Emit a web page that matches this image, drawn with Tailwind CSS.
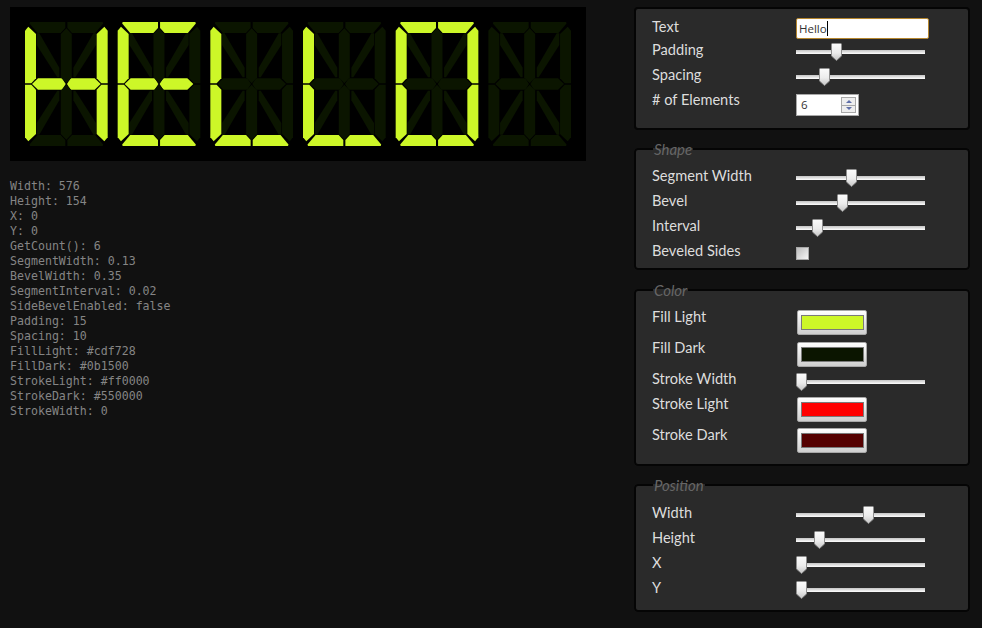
<!DOCTYPE html>
<html lang="en">

<head>
    <meta charset="UTF-8">
    <title>Segment Display</title>
    <script src="https://cdn.jsdelivr.net/npm/@tailwindcss/browser@4"></script>
</head>

<body class="bg-[#111111] overflow-hidden">

    <svg width="0" height="0" class="absolute">
        <defs>
            <linearGradient id="thumbFill" x1="0" y1="0" x2="0" y2="1">
                <stop offset="0" stop-color="#fbfbfb" />
                <stop offset="0.55" stop-color="#ececec" />
                <stop offset="1" stop-color="#c4c4c4" />
            </linearGradient>
            <symbol id="thumb" viewBox="0 0 11 18">
                <path d="M1.5 .5h8a1 1 0 0 1 1 1V13l-5 4.5-5-4.5V1.5a1 1 0 0 1 1-1z" fill="url(#thumbFill)" stroke="#8f8f8f" />
            </symbol>
        </defs>
    </svg>

    <div class="flex h-[628px] font-['Lato',sans-serif] text-[14.6px] text-[#dddddd]">

        <!-- Display and values -->
        <div class="w-[634px] pl-[10px] pt-[7px]">
            <svg id="display" width="576" height="154" class="block bg-black"></svg>
            <pre class="mt-[18px] font-['DejaVu_Sans_Mono',monospace] text-[11.6px] leading-[15px] text-[#858585]">Width: 576
Height: 154
X: 0
Y: 0
GetCount(): 6
SegmentWidth: 0.13
BevelWidth: 0.35
SegmentInterval: 0.02
SideBevelEnabled: false
Padding: 15
Spacing: 10
FillLight: #cdf728
FillDark: #0b1500
StrokeLight: #ff0000
StrokeDark: #550000
StrokeWidth: 0</pre>
        </div>

        <!-- Controls -->
        <div class="w-[336px] pt-[7px]">

            <div class="h-[123px] rounded-[4px] border-2 border-[#050505] bg-[#2a2a2a] pl-[16px] pt-[8px]">
                <div class="flex h-[23px]">
                    <div class="w-[144px] leading-[19px]">Text</div>
                    <div class="mt-[1px] flex h-[21px] w-[133px] items-center rounded-[2px] border border-[#b5862e] bg-white pl-[2px] font-['Open_Sans',sans-serif] text-[11.5px] text-[#333333]">Hello<span class="h-[15px] w-px bg-black"></span></div>
                </div>
                <div class="flex h-[25px]">
                    <div class="w-[144px] leading-[19px]">Padding</div>
                    <div class="relative h-[25px] w-[129px]">
                        <div class="absolute top-[10px] h-[4px] w-full bg-linear-to-b from-[#c4c4c4] to-white"></div>
                        <svg class="absolute left-[35px] top-[3px]" width="11" height="18"><use href="#thumb" /></svg>
                    </div>
                </div>
                <div class="flex h-[25px]">
                    <div class="w-[144px] leading-[19px]">Spacing</div>
                    <div class="relative h-[25px] w-[129px]">
                        <div class="absolute top-[10px] h-[4px] w-full bg-linear-to-b from-[#c4c4c4] to-white"></div>
                        <svg class="absolute left-[23px] top-[3px]" width="11" height="18"><use href="#thumb" /></svg>
                    </div>
                </div>
                <div class="flex h-[25px]">
                    <div class="w-[144px] leading-[19px]"># of Elements</div>
                    <div class="mt-[4px] flex h-[22px] w-[63px] items-center justify-between border border-[#a8a8a8] bg-white pl-[4px] pr-[2px] font-['Open_Sans',sans-serif] text-[11.5px] text-[#333333]">
                        6
                        <div class="flex h-[16px] w-[15px] flex-col gap-px bg-[#a8a8a8] p-px">
                            <div class="flex flex-1 items-center justify-center bg-[#eeeeee]">
                                <div class="h-0 w-0 border-x-[3px] border-b-[3px] border-x-transparent border-b-[#5f6fa8]"></div>
                            </div>
                            <div class="flex flex-1 items-center justify-center bg-[#eeeeee]">
                                <div class="h-0 w-0 border-x-[3px] border-t-[3px] border-x-transparent border-t-[#5f6fa8]"></div>
                            </div>
                        </div>
                    </div>
                </div>
            </div>

            <fieldset class="mt-[10px] h-[130px] rounded-[4px] border-2 border-[#050505] bg-[#2a2a2a] pl-[16px]">
                <legend class="ml-[1px] h-[18px] px-[1px] text-[15px] italic leading-[18px] text-[#666666]">Shape</legend>
                <div class="pt-[8px]">
                    <div class="flex h-[25px]">
                        <div class="w-[144px] leading-[19px]">Segment Width</div>
                        <div class="relative h-[25px] w-[129px]">
                            <div class="absolute top-[10px] h-[4px] w-full bg-linear-to-b from-[#c4c4c4] to-white"></div>
                            <svg class="absolute left-[50px] top-[3px]" width="11" height="18"><use href="#thumb" /></svg>
                        </div>
                    </div>
                    <div class="flex h-[25px]">
                        <div class="w-[144px] leading-[19px]">Bevel</div>
                        <div class="relative h-[25px] w-[129px]">
                            <div class="absolute top-[10px] h-[4px] w-full bg-linear-to-b from-[#c4c4c4] to-white"></div>
                            <svg class="absolute left-[41px] top-[3px]" width="11" height="18"><use href="#thumb" /></svg>
                        </div>
                    </div>
                    <div class="flex h-[25px]">
                        <div class="w-[144px] leading-[19px]">Interval</div>
                        <div class="relative h-[25px] w-[129px]">
                            <div class="absolute top-[10px] h-[4px] w-full bg-linear-to-b from-[#c4c4c4] to-white"></div>
                            <svg class="absolute left-[16px] top-[3px]" width="11" height="18"><use href="#thumb" /></svg>
                        </div>
                    </div>
                    <div class="flex h-[25px]">
                        <div class="w-[144px] leading-[19px]">Beveled Sides</div>
                        <div class="mt-[6px] h-[13px] w-[13px] border border-[#a8a8a8] bg-linear-to-br from-[#bdbdbd] to-[#f6f6f6]"></div>
                    </div>
                </div>
            </fieldset>

            <fieldset class="mt-[11px] h-[185px] rounded-[4px] border-2 border-[#050505] bg-[#2a2a2a] pl-[16px]">
                <legend class="ml-[1px] h-[18px] px-[1px] text-[15px] italic leading-[18px] text-[#666666]">Color</legend>
                <div class="pt-[8px]">
                    <div class="flex h-[31px]">
                        <div class="w-[145px] leading-[19px]">Fill Light</div>
                        <div class="mt-[3px] h-[25px] w-[70px] rounded-[2px] border border-[#a8a8a8] bg-linear-to-b from-white to-[#cfcfcf] pl-[3px] pr-[2px] pt-[4px]">
                            <div class="h-[15px] border border-[#7a7a7a] bg-[#cdf728]"></div>
                        </div>
                    </div>
                    <div class="flex h-[31px]">
                        <div class="w-[145px] leading-[19px]">Fill Dark</div>
                        <div class="mt-[4px] h-[25px] w-[70px] rounded-[2px] border border-[#a8a8a8] bg-linear-to-b from-white to-[#cfcfcf] pl-[3px] pr-[2px] pt-[4px]">
                            <div class="h-[15px] border border-[#7a7a7a] bg-[#0b1500]"></div>
                        </div>
                    </div>
                    <div class="flex h-[25px]">
                        <div class="w-[144px] leading-[19px]">Stroke Width</div>
                        <div class="relative mt-[1px] h-[24px] w-[129px]">
                            <div class="absolute top-[10px] h-[4px] w-full bg-linear-to-b from-[#c4c4c4] to-white"></div>
                            <svg class="absolute left-[0px] top-[3px]" width="11" height="18"><use href="#thumb" /></svg>
                        </div>
                    </div>
                    <div class="flex h-[31px]">
                        <div class="w-[145px] leading-[19px]">Stroke Light</div>
                        <div class="mt-[3px] h-[25px] w-[70px] rounded-[2px] border border-[#a8a8a8] bg-linear-to-b from-white to-[#cfcfcf] pl-[3px] pr-[2px] pt-[4px]">
                            <div class="h-[15px] border border-[#7a7a7a] bg-[#ff0000]"></div>
                        </div>
                    </div>
                    <div class="flex h-[31px]">
                        <div class="w-[145px] leading-[19px]">Stroke Dark</div>
                        <div class="mt-[3px] h-[25px] w-[70px] rounded-[2px] border border-[#a8a8a8] bg-linear-to-b from-white to-[#cfcfcf] pl-[3px] pr-[2px] pt-[4px]">
                            <div class="h-[15px] border border-[#7a7a7a] bg-[#550000]"></div>
                        </div>
                    </div>
                </div>
            </fieldset>

            <fieldset class="mt-[10px] h-[136px] rounded-[4px] border-2 border-[#050505] bg-[#2a2a2a] pl-[16px]">
                <legend class="ml-[1px] h-[18px] px-[1px] text-[15px] italic leading-[18px] text-[#666666]">Position</legend>
                <div class="pt-[9px]">
                    <div class="flex h-[25px]">
                        <div class="w-[144px] leading-[19px]">Width</div>
                        <div class="relative h-[25px] w-[129px]">
                            <div class="absolute top-[10px] h-[4px] w-full bg-linear-to-b from-[#c4c4c4] to-white"></div>
                            <svg class="absolute left-[67px] top-[3px]" width="11" height="18"><use href="#thumb" /></svg>
                        </div>
                    </div>
                    <div class="flex h-[25px]">
                        <div class="w-[144px] leading-[19px]">Height</div>
                        <div class="relative h-[25px] w-[129px]">
                            <div class="absolute top-[10px] h-[4px] w-full bg-linear-to-b from-[#c4c4c4] to-white"></div>
                            <svg class="absolute left-[18px] top-[3px]" width="11" height="18"><use href="#thumb" /></svg>
                        </div>
                    </div>
                    <div class="flex h-[25px]">
                        <div class="w-[144px] leading-[19px]">X</div>
                        <div class="relative h-[25px] w-[129px]">
                            <div class="absolute top-[10px] h-[4px] w-full bg-linear-to-b from-[#c4c4c4] to-white"></div>
                            <svg class="absolute left-[0px] top-[3px]" width="11" height="18"><use href="#thumb" /></svg>
                        </div>
                    </div>
                    <div class="flex h-[25px]">
                        <div class="w-[144px] leading-[19px]">Y</div>
                        <div class="relative h-[25px] w-[129px]">
                            <div class="absolute top-[10px] h-[4px] w-full bg-linear-to-b from-[#c4c4c4] to-white"></div>
                            <svg class="absolute left-[0px] top-[3px]" width="11" height="18"><use href="#thumb" /></svg>
                        </div>
                    </div>
                </div>
            </fieldset>

        </div>
    </div>

    <script>
        const W = 82.67, H = 124;
        const mx = pts => pts.map(p => [W - p[0], p[1]]);
        const my = pts => pts.map(p => [p[0], H - p[1]]);

        // one quarter of the digit, the rest is mirrored
        const bar = [[5, 0], [40.3, 0], [40.3, 6], [35.7, 11], [12.5, 11], [4.5, 1.5]];
        const side = [[0, 8.7], [3.3, 4.7], [11, 12], [11, 56.3], [6.3, 61.3], [0, 61.3]];
        const mid = [[7, 62], [13, 56.3], [37, 56.3], [40.7, 62], [37, 67.7], [13, 67.7]];
        const center = [[41.33, 6.3], [46.8, 12], [46.8, 55.5], [41.33, 61.3], [35.8, 55.5], [35.8, 12]];
        const diag = [[11.7, 11.3], [14.3, 11.3], [34.3, 45.7], [34.3, 55.3], [32.3, 55.3], [11.7, 23]];

        const segments = {
            a1: bar, a2: mx(bar), d1: my(bar), d2: mx(my(bar)),
            f: side, b: mx(side), e: my(side), c: mx(my(side)),
            g1: mid, g2: mx(mid),
            i: center, l: my(center),
            h: diag, j: mx(diag), k: my(diag), m: mx(my(diag))
        };

        const letters = [
            ['f', 'e', 'b', 'c', 'g1', 'g2'],
            ['a1', 'a2', 'f', 'e', 'g1', 'g2', 'd1', 'd2'],
            ['f', 'e', 'd1', 'd2'],
            ['f', 'e', 'd1', 'd2'],
            ['a1', 'a2', 'b', 'c', 'd1', 'd2', 'e', 'f'],
            []
        ];

        let html = '';
        letters.forEach((lit, n) => {
            const ox = 15 + n * 92.67, oy = 15;
            for (const name in segments) {
                const pts = segments[name].map(p => (p[0] + ox).toFixed(2) + ',' + (p[1] + oy).toFixed(2)).join(' ');
                html += `<polygon points="${pts}" fill="${lit.includes(name) ? '#cdf728' : '#0b1500'}" />`;
            }
        });
        document.getElementById('display').innerHTML = html;
    </script>

</body>

</html>
